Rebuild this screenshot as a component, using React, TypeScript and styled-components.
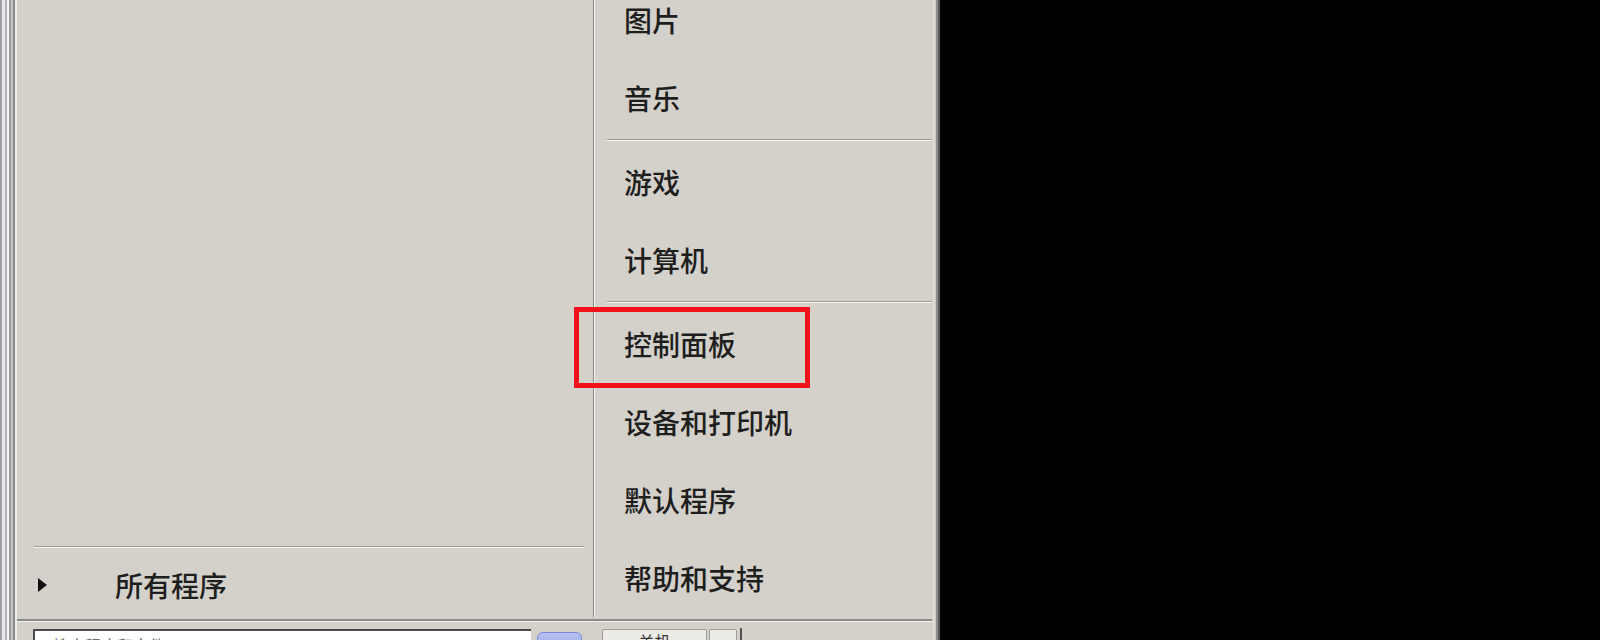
import React from 'react'
import styled, { createGlobalStyle } from 'styled-components'

const GlobalStyle = createGlobalStyle`
	html, body {
		margin: 0;
		padding: 0;
		background: #000;
		overflow: hidden;
	}
	body {
		font-family: 'Noto Sans CJK SC', 'Noto Sans', sans-serif;
	}
`

const StyledPage = styled.div`
	display: flex;
	width: 1600px;
	height: 640px;
	background: #000;
	overflow: hidden;
`
const StyledMenu = styled.div`
	display: flex;
	width: 940px;
	height: 640px;
	background: #d4d1ca;
	flex-shrink: 0;
`
const StyledLeftEdge = styled.div`
	width: 17px;
	flex-shrink: 0;
	background: linear-gradient(
		to right,
		#a0a0a8 0 2px,
		#e8e8ee 2px 5px,
		#b4b4bc 5px 7px,
		#f4f4f6 7px 9px,
		#9c9c9c 9px 11px,
		#c4c4c4 11px 13px,
		#8a8a8a 13px 15px,
		#efefef 15px 17px
	);
`
const StyledRightEdge = styled.div`
	width: 8px;
	flex-shrink: 0;
	background: linear-gradient(
		to right,
		#d4d1ca 0 1px,
		#dedfd2 1px 3px,
		#c8c8c0 3px 4px,
		#8a8a8a 4px 6px,
		#5c5c5c 6px 8px
	);
`
const StyledBody = styled.div`
	flex: 1;
	display: flex;
	flex-direction: column;
	min-width: 0;
`
const StyledTop = styled.div`
	display: flex;
	height: 619px;
	flex-shrink: 0;
`
const StyledLeftPane = styled.div`
	width: 576px;
	display: flex;
	flex-direction: column;
	justify-content: flex-end;
`
const StyledDivider = styled.div`
	width: 1px;
	border-left: 1px solid #8a8a8a;
	background: #f4f4f0;
	height: 617px;
	flex-shrink: 0;
`
const StyledRightPane = styled.div`
	flex: 1;
	display: flex;
	flex-direction: column;
	overflow: visible;
`
const StyledSeparator = styled.div<{ inset: number; right: number }>`
	height: 1px;
	border-top: 1px solid #9a9a98;
	background: #f6f6f2;
	margin: 2px ${(p) => p.right}px 2px ${(p) => p.inset}px;
	flex-shrink: 0;
`
const StyledItem = styled.div<{ first?: boolean }>`
	position: relative;
	display: flex;
	align-items: center;
	height: 78px;
	flex-shrink: 0;
	padding-left: 29px;
	margin-top: ${(p) => (p.first ? '-19px' : '0')};
	font-size: 28px;
	font-weight: 500;
	color: #1e1e1e;
	letter-spacing: 0;
`
const StyledHighlight = styled.div`
	position: absolute;
	left: -21px;
	top: 2px;
	width: 226px;
	height: 71px;
	border: 5px solid #f2101a;
	pointer-events: none;
`
const StyledAllPrograms = styled.div`
	display: flex;
	align-items: center;
	height: 69px;
	padding-left: 21px;
	font-size: 28px;
	font-weight: 500;
	color: #1e1e1e;
`
const StyledArrow = styled.span`
	width: 0;
	height: 0;
	border-top: 7px solid transparent;
	border-bottom: 7px solid transparent;
	border-left: 9px solid #111;
	margin-right: 68px;
`
const StyledBottomBar = styled.div`
	display: flex;
	align-items: flex-start;
	border-top: 2px solid #8a8a8a;
	box-shadow: inset 0 1px 0 #f2f2ee;
	padding: 8px 0 0 16px;
	height: 40px;
`
const StyledSearch = styled.div`
	width: 498px;
	height: 24px;
	background: #fff;
	border-top: 2px solid #4a4a4a;
	border-left: 2px solid #4a4a4a;
	font-size: 16px;
	color: #6a6a6a;
	padding: 4px 0 0 18px;
	box-sizing: border-box;
	overflow: hidden;
	line-height: 20px;
`
const StyledSearchButton = styled.div`
	width: 43px;
	height: 24px;
	margin: 3px 0 0 6px;
	border-radius: 6px;
	border: 1px solid #7a88d8;
	background: linear-gradient(#b8c2f4, #8c9ae4);
`
const StyledShutdown = styled.div<{ w: number; ml: number }>`
	width: ${(p) => p.w}px;
	height: 24px;
	margin-left: ${(p) => p.ml}px;
	background: #ecebe6;
	border: 1px solid #9c9c98;
	border-radius: 2px;
	font-size: 16px;
	color: #333;
	text-align: center;
	line-height: 22px;
	overflow: hidden;
`
const StyledBarLine = styled.div`
	width: 2px;
	height: 30px;
	margin: -1px 0 0 3px;
	background: #4e4e4e;
`

const topItems = ['图片', '音乐']
const midItems = ['游戏', '计算机']
const lowItems = ['控制面板', '设备和打印机', '默认程序', '帮助和支持']

export default function App() {
	return (
		<StyledPage>
			<GlobalStyle />
			<StyledMenu>
				<StyledLeftEdge />
				<StyledBody>
					<StyledTop>
						<StyledLeftPane>
							<StyledSeparator inset={17} right={9} />
							<StyledAllPrograms>
								<StyledArrow />
								所有程序
							</StyledAllPrograms>
						</StyledLeftPane>
						<StyledDivider />
						<StyledRightPane>
							{topItems.map((t, i) => (
								<StyledItem key={t} first={i === 0}>
									{t}
								</StyledItem>
							))}
							<StyledSeparator inset={12} right={0} />
							{midItems.map((t) => (
								<StyledItem key={t}>{t}</StyledItem>
							))}
							<StyledSeparator inset={12} right={0} />
							{lowItems.map((t, i) => (
								<StyledItem key={t}>
									{t}
									{i === 0 && <StyledHighlight />}
								</StyledItem>
							))}
						</StyledRightPane>
					</StyledTop>
					<StyledBottomBar>
						<StyledSearch>搜索程序和文件</StyledSearch>
						<StyledSearchButton />
						<StyledShutdown w={103} ml={20}>
							关机
						</StyledShutdown>
						<StyledShutdown w={26} ml={2} />
						<StyledBarLine />
					</StyledBottomBar>
				</StyledBody>
				<StyledRightEdge />
			</StyledMenu>
		</StyledPage>
	)
}
